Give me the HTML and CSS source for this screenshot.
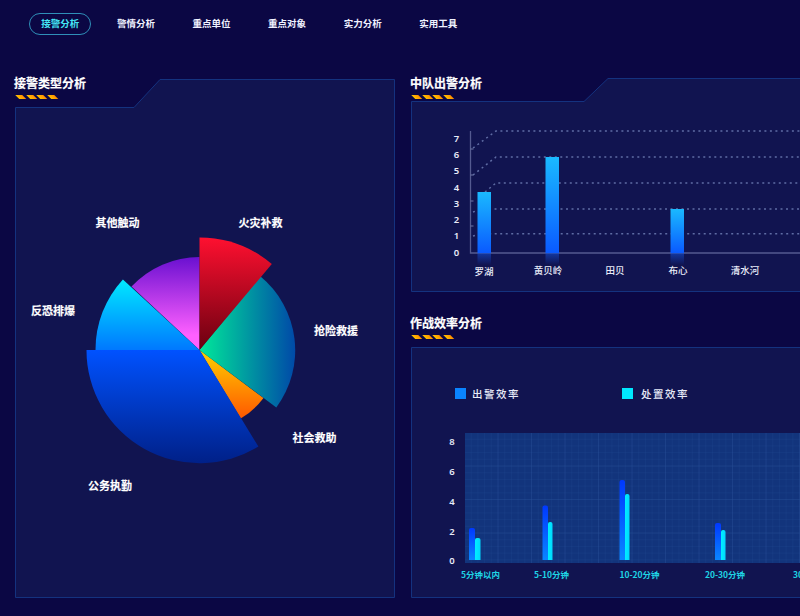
FILE: index.html
```html
<!DOCTYPE html>
<html lang="zh">
<head>
<meta charset="utf-8">
<title>接警分析</title>
<link rel="stylesheet" href="styles.css">
</head>
<body>
<nav class="nav">
  <a class="nav-item active">接警分析</a>
  <a class="nav-item">警情分析</a>
  <a class="nav-item">重点单位</a>
  <a class="nav-item">重点对象</a>
  <a class="nav-item">实力分析</a>
  <a class="nav-item">实用工具</a>
</nav>
<main class="main">
  <section class="panel panel-left">
    <svg class="frame" viewBox="14 75 381 523" aria-hidden="true"><path class="frame-path" d="M15.5 107.5H134L160 79.5H394.5V597.5H15.5Z"/></svg>
    <header class="head"><h2>接警类型分析</h2><div class="stripes"><i></i><i></i><i></i><i></i></div></header>
    <svg class="chart chart-pie" viewBox="14 107 381 491">
      <defs>
        <linearGradient id="gRed" gradientUnits="userSpaceOnUse" x1="0" y1="237" x2="0" y2="350"><stop offset="0" stop-color="#ff1030"/><stop offset="1" stop-color="#6a0010"/></linearGradient>
        <linearGradient id="gTeal" gradientUnits="userSpaceOnUse" x1="200" y1="0" x2="296" y2="0"><stop offset="0" stop-color="#00e89a"/><stop offset="1" stop-color="#0048a8"/></linearGradient>
        <linearGradient id="gOrange" gradientUnits="userSpaceOnUse" x1="0" y1="350" x2="0" y2="420"><stop offset="0" stop-color="#ffd000"/><stop offset="1" stop-color="#ff5500"/></linearGradient>
        <linearGradient id="gBlue" gradientUnits="userSpaceOnUse" x1="0" y1="350" x2="0" y2="463"><stop offset="0" stop-color="#0052ff"/><stop offset="1" stop-color="#002088"/></linearGradient>
        <linearGradient id="gCyan" gradientUnits="userSpaceOnUse" x1="0" y1="279" x2="0" y2="350"><stop offset="0" stop-color="#00eaff"/><stop offset="1" stop-color="#0078ff"/></linearGradient>
        <linearGradient id="gPurple" gradientUnits="userSpaceOnUse" x1="0" y1="257" x2="0" y2="335"><stop offset="0" stop-color="#6a10d0"/><stop offset="1" stop-color="#ff60ff"/></linearGradient>
      </defs>
      <path fill="url(#gPurple)" d="M199.5 350L131.5 286.6A93 93 0 0 1 199.5 257Z"/>
      <path fill="url(#gCyan)" d="M199.5 350H95.5A104 104 0 0 1 122.9 279.4Z"/>
      <path fill="url(#gOrange)" d="M199.5 350L240.7 418.6A80 80 0 0 0 263.5 398Z"/>
      <path fill="url(#gTeal)" d="M199.5 350L260 276A96 96 0 0 1 276.3 407.5Z"/>
      <path fill="url(#gRed)" d="M199.5 350V237.5A112.5 112.5 0 0 1 271.8 264Z"/>
      <path fill="url(#gBlue)" d="M199.5 350L258.4 446.6A113 113 0 0 1 86.5 350Z"/>
      <text class="pie-label" x="260.5" y="227">火灾补救</text>
      <text class="pie-label" x="117.5" y="227">其他触动</text>
      <text class="pie-label" x="336" y="335">抢险救援</text>
      <text class="pie-label" x="314.5" y="442">社会救助</text>
      <text class="pie-label" x="110" y="490">公务执勤</text>
      <text class="pie-label" x="53" y="315">反恐排爆</text>
    </svg>
  </section>
  <div class="col-right">
    <section class="panel panel-bars">
      <svg class="frame" viewBox="410 75 400 217" aria-hidden="true"><path class="frame-path" d="M411.5 101.5H584L608 78.5H830V291.5H411.5Z"/></svg>
      <header class="head head-short"><h2>中队出警分析</h2><div class="stripes"><i></i><i></i><i></i><i></i></div></header>
      <svg class="chart chart-bars" viewBox="410 101 390 191">
        <defs>
          <linearGradient id="gBar" x1="0" y1="0" x2="0" y2="1"><stop offset="0" stop-color="#1ab9ff"/><stop offset="1" stop-color="#0a5aff"/></linearGradient>
          <linearGradient id="gReflect" x1="0" y1="0" x2="0" y2="1"><stop offset="0" stop-color="#1450d8" stop-opacity=".6"/><stop offset="1" stop-color="#1450d8" stop-opacity="0"/></linearGradient>
        </defs>
        <g class="grid-dots">
          <path d="M473 148L496 131H800"/>
          <path d="M473 175L496 157H800"/>
          <path d="M485 192L496 183H800"/>
          <path d="M473 212L482 209H800"/>
          <path d="M473 236L482 233.7H800"/>
        </g>
        <path class="axis" d="M470.5 131V253H800"/>
        <path class="axis-tick" d="M470.5 149h3M470.5 175h3M470.5 201h3M470.5 226h3"/>
        <rect x="477.5" y="192" width="13.5" height="61" fill="url(#gBar)"/>
        <rect x="545.5" y="157" width="13.5" height="96" fill="url(#gBar)"/>
        <rect x="670.5" y="209" width="13.5" height="44" fill="url(#gBar)"/>
        <rect x="477.5" y="253" width="13.5" height="12" fill="url(#gReflect)"/>
        <rect x="545.5" y="253" width="13.5" height="12" fill="url(#gReflect)"/>
        <rect x="670.5" y="253" width="13.5" height="12" fill="url(#gReflect)"/>
        <g class="y-label">
          <text x="456.5" y="141.5">7</text><text x="456.5" y="158">6</text><text x="456.5" y="174">5</text><text x="456.5" y="190.5">4</text>
          <text x="456.5" y="206.5">3</text><text x="456.5" y="223">2</text><text x="456.5" y="239">1</text><text x="456.5" y="255.5">0</text>
        </g>
        <g class="x-label">
          <text x="484" y="275">罗湖</text><text x="548" y="273.5">黄贝岭</text><text x="615" y="273.5">田贝</text><text x="678" y="273.5">布心</text><text x="745" y="273.5">清水河</text>
        </g>
      </svg>
    </section>
    <section class="panel panel-eff">
      <svg class="frame" viewBox="410 315 400 283" aria-hidden="true"><path class="frame-path" d="M411.5 347.5H830V597.5H411.5Z"/></svg>
      <header class="head"><h2>作战效率分析</h2><div class="stripes"><i></i><i></i><i></i><i></i></div></header>
      <svg class="chart chart-eff" viewBox="410 347 390 251">
        <defs>
          <pattern id="pGrid" patternUnits="userSpaceOnUse" x="465" y="433" width="6.7" height="6.7"><path class="grid-minor" d="M6.7 0V6.7H0"/></pattern>
          <pattern id="pGridMajor" patternUnits="userSpaceOnUse" x="465" y="433" width="33.5" height="33.5"><path class="grid-major" d="M33.5 0V33.5H0"/></pattern>
          <linearGradient id="gDark" x1="0" y1="0" x2="0" y2="1"><stop offset="0" stop-color="#0038ff"/><stop offset="1" stop-color="#0a86ff"/></linearGradient>
          <linearGradient id="gLight" x1="0" y1="0" x2="1" y2="0"><stop offset="0" stop-color="#00f0ff"/><stop offset="1" stop-color="#00d8ff"/></linearGradient>
        </defs>
        <rect class="legend-a" x="455" y="388" width="11" height="11"/>
        <text class="legend-text" x="472" y="398">出警效率</text>
        <rect class="legend-b" x="622" y="388" width="11" height="11"/>
        <text class="legend-text" x="641" y="398">处置效率</text>
        <rect class="plot" x="465" y="433" width="335" height="130"/>
        <rect x="465" y="433" width="335" height="130" fill="url(#pGrid)"/>
        <rect x="465" y="433" width="335" height="130" fill="url(#pGridMajor)"/>
        <g fill="url(#gDark)">
          <path d="M469 560V530a2 2 0 0 1 2-2h2a2 2 0 0 1 2 2v30Z"/>
          <path d="M542.5 560V507.5a2 2 0 0 1 2-2h1.500a2 2 0 0 1 2 2V560Z"/>
          <path d="M619.500 560V482a2 2 0 0 1 2-2h1.500a2 2 0 0 1 2 2V560Z"/>
          <path d="M715 560V525a2 2 0 0 1 2-2h2a2 2 0 0 1 2 2V560Z"/>
        </g>
        <g fill="url(#gLight)">
          <path d="M475 560V540a2 2 0 0 1 2-2h1.500a2 2 0 0 1 2 2V560Z"/>
          <path d="M548 560V524a2 2 0 0 1 2-2h.5a2 2 0 0 1 2 2V560Z"/>
          <path d="M625 560V496a2 2 0 0 1 2-2h.5a2 2 0 0 1 2 2V560Z"/>
          <path d="M721 560V532a2 2 0 0 1 2-2h.5a2 2 0 0 1 2 2V560Z"/>
        </g>
        <g class="y-label">
          <text x="452" y="444.500">8</text><text x="452" y="474.500">6</text><text x="452" y="504.500">4</text><text x="452" y="534.500">2</text><text x="452" y="564">0</text>
        </g>
        <g class="x-label cyan">
          <text x="480.5" y="577.500">5分钟以内</text><text x="551.5" y="577.500">5-10分钟</text><text x="639.5" y="577.500">10-20分钟</text><text x="725" y="577.500">20-30分钟</text><text x="815" y="577.500">30分钟以上</text>
        </g>
      </svg>
    </section>
  </div>
</main>
</body>
</html>
```
FILE: styles.css
```css
*, *::before { box-sizing: border-box; }
html, body { margin: 0; padding: 0; }
body {
  width: 800px;
  height: 616px;
  overflow: hidden;
  background: #0b0744;
  color: #fff;
  font-family: "Noto Sans CJK SC", "Noto Sans", sans-serif;
}
.nav {
  display: flex;
  height: 75px;
  padding: 13px 0 0 22.5px;
  align-items: flex-start;
}
.nav-item {
  width: 75.6px;
  height: 21px;
  display: flex;
  align-items: center;
  justify-content: center;
  font-size: 9.5px;
  line-height: 19px;
  padding-bottom: 1px;
  font-weight: 700;
  color: #f0f2ff;
}
.nav-item.active {
  color: #45e6f5;
  position: relative;
}
.nav-item.active::before {
  content: "";
  position: absolute;
  left: 6.800px;
  top: 0;
  width: 62px;
  height: 21.500px;
  border: 1px solid #2f8fb8;
  border-radius: 11px;
}
.main {
  display: flex;
  padding-left: 14px;
  gap: 15px;
  align-items: flex-start;
}
.panel {
  position: relative;
  flex: none;
}
.panel-left { width: 381px; height: 523px; }
.col-right {
  width: 390px;
  display: flex;
  flex-direction: column;
  gap: 23px;
  flex: none;
}
.panel-bars { width: 400px; height: 217px; }
.panel-eff { width: 400px; height: 283px; }
.frame {
  position: absolute;
  inset: 0;
  width: 100%;
  height: 100%;
}
.frame-path {
  fill: #111450;
  stroke: #14327f;
  stroke-width: 1;
}
.head {
  position: relative;
  height: 32px;
}
.head-short { height: 26px; }
.head h2 {
  margin: 0;
  font-size: 12px;
  line-height: 16px;
  font-weight: 700;
  color: #fff;
  -webkit-text-stroke: .2px #fff;
}
.stripes {
  display: flex;
  gap: 3.500px;
  margin: 3.500px 0 0 3px;
}
.stripes i {
  display: block;
  width: 7px;
  height: 3.500px;
  transform: skewX(45deg);
  background: linear-gradient(90deg, #ffc400, #ff8a00);
}
.chart {
  position: relative;
  display: block;
}
.chart-pie { width: 381px; height: 491px; }
.chart-bars { width: 390px; height: 191px; }
.chart-eff { width: 390px; height: 251px; }
.pie-label {
  font-size: 11px;
  font-weight: 700;
  fill: #fff;
  text-anchor: middle;
  stroke: #fff;
  stroke-width: .15px;
}
.grid-dots path {
  fill: none;
  stroke: #5f6ca4;
  stroke-width: 1.500;
  stroke-dasharray: 2 3.500;
}
.axis {
  fill: none;
  stroke: #545a90;
  stroke-width: 1.300;
}
.axis-tick {
  fill: none;
  stroke: #7078a8;
  stroke-width: 1;
}
.y-label text {
  font-size: 9.500px;
  font-weight: 600;
  fill: #e8ebf8;
  text-anchor: middle;
  font-family: "Noto Sans", sans-serif;
}
.x-label text {
  font-size: 9.500px;
  font-weight: 500;
  fill: #e8ebf8;
  text-anchor: middle;
}
.x-label.cyan text {
  fill: #1fd3e4;
  font-size: 8.500px;
  font-weight: 700;
}
.legend-a { fill: #0a84ff; }
.legend-b { fill: #00e8ff; }
.legend-text {
  font-size: 10.500px;
  font-weight: 500;
  letter-spacing: 1.500px;
  fill: #e8ebf8;
}
.plot { fill: #12347c; }
.grid-minor {
  fill: none;
  stroke: #2f5aa8;
  stroke-opacity: .3;
  stroke-width: .8;
}
.grid-major {
  fill: none;
  stroke: #3f6cb8;
  stroke-opacity: .25;
  stroke-width: 1;
}
```
